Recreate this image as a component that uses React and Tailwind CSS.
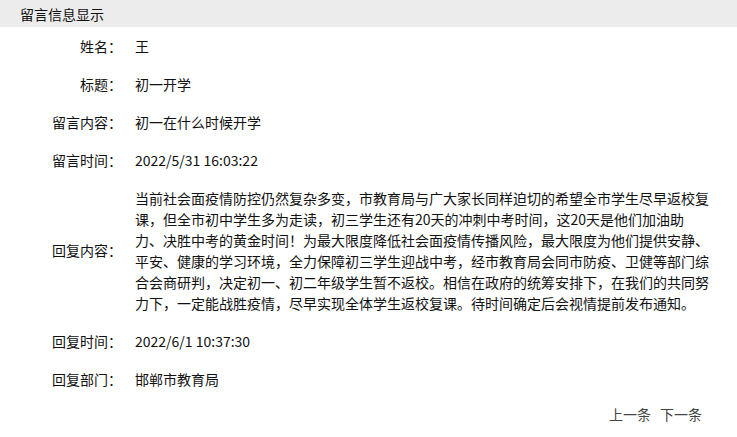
import React from 'react';

const rows = [
    { label: '姓名：', value: '王' },
    { label: '标题：', value: '初一开学' },
    { label: '留言内容：', value: '初一在什么时候开学' },
    { label: '留言时间：', value: '2022/5/31 16:03:22' },
    {
        label: '回复内容：',
        value: '当前社会面疫情防控仍然复杂多变，市教育局与广大家长同样迫切的希望全市学生尽早返校复课，但全市初中学生多为走读，初三学生还有20天的冲刺中考时间，这20天是他们加油助力、决胜中考的黄金时间！为最大限度降低社会面疫情传播风险，最大限度为他们提供安静、平安、健康的学习环境，全力保障初三学生迎战中考，经市教育局会同市防疫、卫健等部门综合会商研判，决定初一、初二年级学生暂不返校。相信在政府的统筹安排下，在我们的共同努力下，一定能战胜疫情，尽早实现全体学生返校复课。待时间确定后会视情提前发布通知。',
    },
    { label: '回复时间：', value: '2022/6/1 10:37:30' },
    { label: '回复部门：', value: '邯郸市教育局' },
];

const App = () => {
    return (
        <div className="min-h-screen bg-white text-[14px] text-[#111] font-['Microsoft_YaHei','Noto_Sans_CJK_SC',sans-serif]">
            <div className="h-[27px] bg-[#ececec] pl-5 flex items-center leading-none">留言信息显示</div>

            <div className="grid grid-cols-[122px_1fr] gap-x-[13px]">
                {rows.map(row => (
                    <React.Fragment key={row.label}>
                        <div className="flex items-center justify-end py-[8.5px] leading-[21px]">{row.label}</div>
                        <div className="py-[8.5px] leading-[21px] w-[575px]">{row.value}</div>
                    </React.Fragment>
                ))}
            </div>

            <div className="flex justify-end gap-[9px] pr-[35px] pt-[6px] text-[#444]">
                <a href="#">上一条</a>
                <a href="#">下一条</a>
            </div>
        </div>
    );
};

export default App;
